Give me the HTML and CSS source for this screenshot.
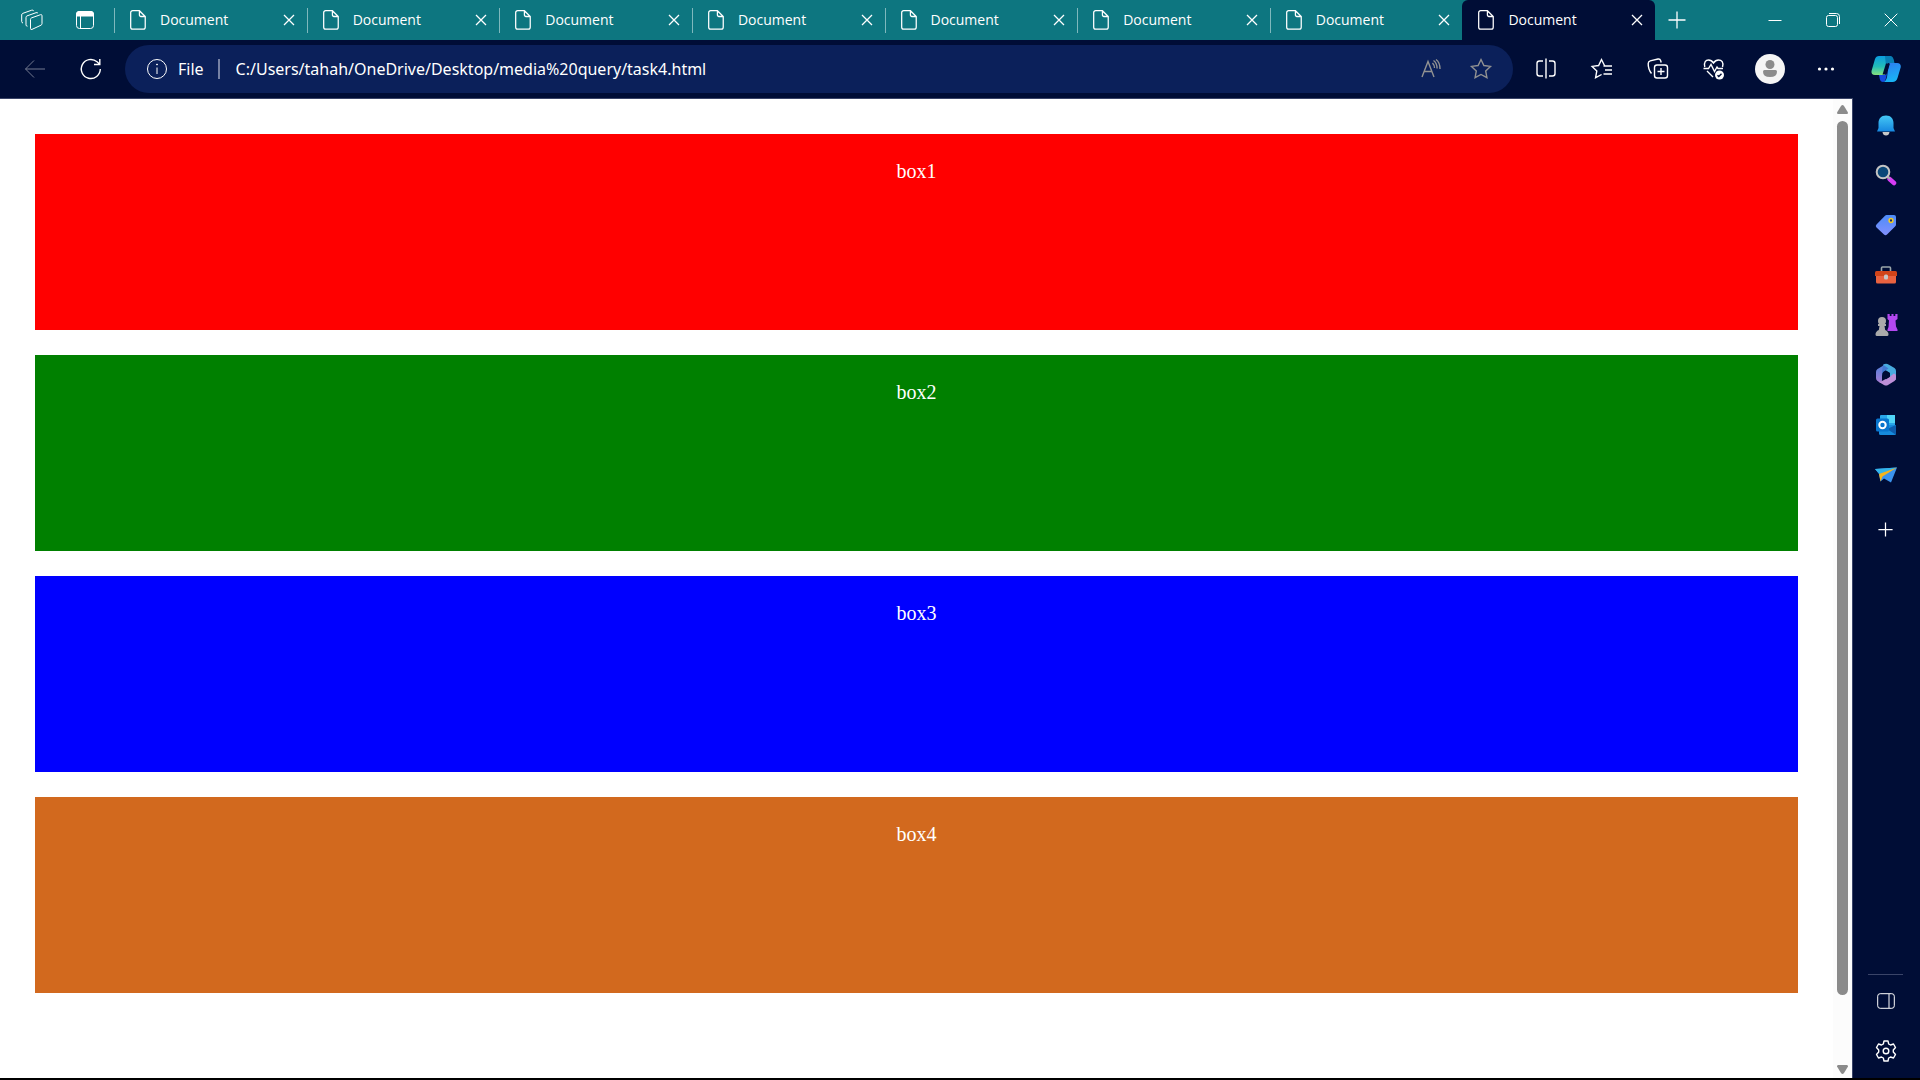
FILE: index.html
```html
<!DOCTYPE html>
<html lang="en">
<head>
<meta charset="utf-8">
<title>Document</title>
<link rel="stylesheet" href="styles.css">
</head>
<body>
<svg class="defs" aria-hidden="true">
  <symbol id="doc" viewBox="0 0 16 20"><path d="M2.500.5H9.500L15.500 6.500V17.500a2 2 0 0 1-2 2H2.500a2 2 0 0 1-2-2V2.500a2 2 0 0 1 2-2ZM9.500.5V5a1.500 1.500 0 0 0 1.500 1.500h4.500" transform="translate(.2 .2) scale(.97)"/></symbol>
  <symbol id="cross" viewBox="0 0 12 12"><path d="M1 1l10 10M11 1L1 11"/></symbol>
  <symbol id="plus" viewBox="0 0 18 18"><path d="M9 .5v17M.5 9h17"/></symbol>
</svg>
<div class="browser">
  <header class="tabstrip">
    <button class="strip-btn" aria-label="Workspaces"><svg class="line" width="22" height="22" viewBox="0 0 22 22"><path d="M9.500 10.500q0-1.200 1-1.600l9-3.200q1.500-.4 1.500 1v8q0 1-1 1.500l-9 4.200q-1.500.6-1.500-1ZM6.500 17.200q-1.500 0-1.500-1.300V8.500q0-1.200 1-1.600l9-3.200q1.500-.4 2 .6M2 14q-1.300-.2-1.300-1.500V6q0-1.200 1-1.600l9-3.200q1.500-.4 2 .6"/></svg></button>
    <button class="strip-btn" aria-label="Tab actions"><svg class="line" width="20" height="20" viewBox="0 0 20 20"><rect x="1.500" y="1.500" width="17" height="17" rx="3"/><path d="M1.500 6V4a2.500 2.500 0 0 1 2.500-2.500h12A2.500 2.500 0 0 1 18.500 4v2Z" fill="#fff"/><path d="M5.500 6v12"/></svg></button>
    <nav class="tabs" aria-label="Tabs">
      <div class="tab"><svg class="line" width="16" height="20"><use href="#doc"/></svg><a href="#">Document</a><button aria-label="Close tab"><svg class="line" width="12" height="12"><use href="#cross"/></svg></button></div>
      <div class="tab"><svg class="line" width="16" height="20"><use href="#doc"/></svg><a href="#">Document</a><button aria-label="Close tab"><svg class="line" width="12" height="12"><use href="#cross"/></svg></button></div>
      <div class="tab"><svg class="line" width="16" height="20"><use href="#doc"/></svg><a href="#">Document</a><button aria-label="Close tab"><svg class="line" width="12" height="12"><use href="#cross"/></svg></button></div>
      <div class="tab"><svg class="line" width="16" height="20"><use href="#doc"/></svg><a href="#">Document</a><button aria-label="Close tab"><svg class="line" width="12" height="12"><use href="#cross"/></svg></button></div>
      <div class="tab"><svg class="line" width="16" height="20"><use href="#doc"/></svg><a href="#">Document</a><button aria-label="Close tab"><svg class="line" width="12" height="12"><use href="#cross"/></svg></button></div>
      <div class="tab"><svg class="line" width="16" height="20"><use href="#doc"/></svg><a href="#">Document</a><button aria-label="Close tab"><svg class="line" width="12" height="12"><use href="#cross"/></svg></button></div>
      <div class="tab"><svg class="line" width="16" height="20"><use href="#doc"/></svg><a href="#">Document</a><button aria-label="Close tab"><svg class="line" width="12" height="12"><use href="#cross"/></svg></button></div>
      <div class="tab active"><svg class="line" width="16" height="20"><use href="#doc"/></svg><a href="#" aria-current="page">Document</a><button aria-label="Close tab"><svg class="line" width="12" height="12"><use href="#cross"/></svg></button></div>
    </nav>
    <button class="new-tab" aria-label="New tab"><svg class="line" width="18" height="18"><use href="#plus"/></svg></button>
    <div class="window-controls">
      <button aria-label="Minimize"><svg class="line" width="14" height="14" viewBox="0 0 14 14"><path d="M.5 7.500h13"/></svg></button>
      <button aria-label="Restore"><svg class="line" width="14" height="14" viewBox="0 0 14 14"><rect x=".5" y="2.500" width="11" height="11" rx="2"/><path d="M3 .5h7.500a3 3 0 0 1 3 3V11"/></svg></button>
      <button aria-label="Close"><svg class="line" width="14" height="14" viewBox="0 0 14 14"><path d="M.7.7l12.600 12.600M13.300.7L.7 13.300"/></svg></button>
    </div>
  </header>

  <div class="toolbar">
    <button class="tool dim" aria-label="Back"><svg class="line" width="22" height="20" viewBox="0 0 22 20"><path d="M21 10H1.500M10 1.500L1.500 10l8.500 8.500"/></svg></button>
    <button class="tool" aria-label="Refresh"><svg class="line thick" width="22" height="22" viewBox="0 0 22 22"><path d="M20.300 11a9.500 9.500 0 1 1-3.300-7.200L19.500 6M19.800 1v5.500H14"/></svg></button>
    <div class="address">
      <svg class="line" width="22" height="22" viewBox="0 0 22 22"><circle cx="11" cy="11" r="9.500"/><path d="M11 9.500v6.500"/><circle cx="11" cy="6.500" r=".5" fill="#fff"/></svg>
      <label for="url">File</label>
      <input id="url" type="text" value="C:/Users/tahah/OneDrive/Desktop/media%20query/task4.html">
      <button class="addr-btn" aria-label="Read aloud"><svg class="line" width="20" height="20" viewBox="0 0 20 20"><path d="M1 18L7 2.500 13 18M3.200 12.500h7.600M11.500 4q2 2 2 5M12.500 1.500q3.500 2.500 3.600 8M15 .5q4 3 4 9.500"/></svg></button>
      <button class="addr-btn" aria-label="Add to favorites"><svg class="line" width="22" height="22" viewBox="0 0 22 22"><path d="M11 1.500l2.900 6 6.600.9-4.800 4.600 1.200 6.600L11 16.500l-5.900 3.100L6.300 13 1.500 8.400l6.600-.9Z"/></svg></button>
    </div>
    <button class="tool" aria-label="Split screen"><svg class="line thick" width="22" height="22" viewBox="0 0 22 22"><path d="M8 3H4.500A2.500 2.500 0 0 0 2 5.500v10A2.500 2.500 0 0 0 4.500 18H8M14 3h3.500A2.500 2.500 0 0 1 20 5.500v10a2.500 2.500 0 0 1-2.500 2.500H14M11 .5v20"/></svg></button>
    <button class="tool" aria-label="Favorites"><svg class="line thick" width="22" height="22" viewBox="0 0 22 22"><path d="M13.500 7.500L10.500 1.500 7.600 7.500l-6.500.9 4.700 4.600-1.200 6.600 6-3.100M12.500 8H21M14 12h7M12.500 16H21"/></svg></button>
    <button class="tool" aria-label="Collections"><svg class="line thick" width="22" height="22" viewBox="0 0 22 22"><rect x="7.500" y="7" width="13" height="13" rx="2.500"/><path d="M14 10v7M10.500 13.500h7M4.500 15.500Q1 11 1.200 5.500q0-2 2-2.600L11 1q2-.4 2.600 1.500l.6 2"/></svg></button>
    <button class="tool" aria-label="Browser essentials"><svg class="line thick" width="22" height="22" viewBox="0 0 22 22"><path d="M1.800 9C.5 4 3 2 5.500 2q3 0 5 3 2-3 5-3c3 0 5.500 2 4 7M.5 10.500h5L8 6.500l3.500 7L14 9l1 1.500h5M4 13l6 6"/><circle cx="16.500" cy="17" r="4.500" fill="#fff" stroke="none"/><path d="M14.500 17.200l1.300 1.300 2.700-2.700" stroke="#000d36"/></svg></button>
    <button class="tool" aria-label="Profile"><svg width="30" height="30" viewBox="0 0 30 30"><circle cx="15" cy="15" r="15" fill="#f5f5f5"/><circle cx="15" cy="10.500" r="4.500" fill="#8c8c8c"/><path d="M9.500 16h11q1.500 0 1.500 1.500Q22 23 15 23t-7-5.500Q8 16 9.500 16Z" fill="#8c8c8c"/></svg></button>
    <button class="tool" aria-label="Settings and more"><svg width="18" height="6" viewBox="0 0 18 6" fill="#fff"><circle cx="2.500" cy="3" r="1.600"/><circle cx="9" cy="3" r="1.600"/><circle cx="15.500" cy="3" r="1.600"/></svg></button>
    <button class="copilot" aria-label="Copilot"><svg width="30" height="28" viewBox="0 0 30 28"><defs><linearGradient id="ca" x2="0" y2="1"><stop stop-color="#0b9de0"/><stop offset=".55" stop-color="#22bcb8"/><stop offset="1" stop-color="#86e27d"/></linearGradient><linearGradient id="cb" x2=".3" y2="1"><stop stop-color="#2f7af0"/><stop offset="1" stop-color="#19b3f5"/></linearGradient></defs><path d="M8 1h10q3 0 4 3l1 4h-6l-3 12H4q-4 0-3.500-4L4 4q1-3 4-3Z" fill="url(#ca)"/><path d="M14 1h5q2.500 0 3.500 3l1 4h-6Q16 8 15 11Z" fill="#087eb5"/><path d="M18 8h8q4 0 3.800 4L26.500 23q-1.200 4-5 4H12q3-.5 4-5Z" fill="url(#cb)"/><path d="M8 20h6l3-5-2 8q-1 4-3 4-2.500 0-3.200-3Z" fill="#154ce0"/><path d="M15 8.500h4L15.500 19.500h-4Z" fill="#000d36"/></svg></button>
  </div>

  <div class="body">
    <div class="view">
      <main class="page">
        <div class="box red">box1</div>
        <div class="box green">box2</div>
        <div class="box blue">box3</div>
        <div class="box chocolate">box4</div>
      </main>
      <div class="scrollbar" aria-hidden="true">
        <svg width="11" height="9" viewBox="0 0 11 9"><path d="M5.500 0Q6.200 0 7 1l4 6.500Q11 9 10 9H1Q0 9 0 7.500L4 1q.8-1 1.500-1Z"/></svg>
        <div class="track"><div class="thumb"></div></div>
        <svg width="11" height="9" viewBox="0 0 11 9"><path d="M5.500 9Q6.200 9 7 8l4-6.500Q11 0 10 0H1Q0 0 0 1.500L4 8q.8 1 1.500 1Z"/></svg>
      </div>
    </div>
    <aside class="sidebar">
      <button aria-label="Notifications"><svg width="22" height="24" viewBox="0 0 22 24"><defs><linearGradient id="be" x2="0" y2="1"><stop stop-color="#45c8f5"/><stop offset="1" stop-color="#1687e0"/></linearGradient></defs><path d="M7.500 19h7q-.5 3.500-3.500 3.500T7.500 19Z" fill="#c8c8c8"/><path d="M11 2.500c5 0 7.500 3.500 7.500 7.500v5l1.500 3.500H2L3.500 15v-5C3.500 6 6 2.500 11 2.500Z" fill="url(#be)"/></svg></button>
      <button aria-label="Search"><svg width="22" height="22" viewBox="0 0 22 22"><path d="M14.500 15l4.500 4" stroke="#d63cf5" stroke-width="4.500" stroke-linecap="round"/><path d="M12 12l3 3" stroke="#aaa" stroke-width="2"/><circle cx="8" cy="8" r="6.300" fill="#0b4778" stroke="#c4c4c4" stroke-width="2"/></svg></button>
      <button aria-label="Shopping"><svg width="22" height="22" viewBox="0 0 22 22"><defs><linearGradient id="tg" x2="0" y2="1"><stop stop-color="#4d8cf7"/><stop offset="1" stop-color="#8290ff"/></linearGradient></defs><path d="M11.500 1H19q2 0 2 2v7.500q0 1-.7 1.700L12 20.500q-1.500 1.500-3 0L1.500 13.500q-1.500-1.500 0-3L10 1.700q.6-.7 1.500-.7Z" fill="url(#tg)"/><circle cx="16" cy="6.500" r="1.900" fill="#152b70" stroke="#f2cb21" stroke-width="1.500"/></svg></button>
      <button aria-label="Tools"><svg width="24" height="20" viewBox="0 0 24 20"><path d="M7.500 7V3q0-1 1-1h7q1 0 1 1v4" fill="none" stroke="#9ba6aa" stroke-width="1.600"/><path d="M2 9h20v8q0 1.500-1.500 1.500h-17Q2 18.500 2 17Z" fill="#e96240"/><path d="M2.500 6h19q1.500 0 1.500 1.500V11H1V7.500Q1 6 2.500 6Z" fill="#d14419"/><rect x="10" y="9.500" width="4" height="5" rx="1.500" fill="#c7c7c7"/></svg></button>
      <button aria-label="Games"><svg width="24" height="24" viewBox="0 0 24 24"><path d="M13.500 1h2.200v2h1.800V1h2v2h1.800V1h2.200v5l-2 1.500.5 6 1.500 3v1.500h-10V16.500l1-2.500.5-6.500-1.500-1.500Z" fill="#b348f0"/><g fill="#aaa"><circle cx="8" cy="8" r="4"/><path d="M4 11h8v2h-1.500l.7 4q3.300 1.500 3.300 4.500 0 1.500-1.500 1.500H3q-1.500 0-1.500-1.500 0-3 3.300-4.500l.7-4H4Z"/></g></svg></button>
      <button aria-label="Microsoft 365"><svg width="22" height="24" viewBox="0 0 22 24"><defs><linearGradient id="ma" x2="0" y2="1"><stop stop-color="#4a82dd"/><stop offset="1" stop-color="#a77bd2"/></linearGradient></defs><path d="M11 1L2.500 6Q1 7 1 9v6q0 2 1.500 3L6 20q1-1 1-3v-6q0-2 1.500-3l5-2.500V2.300Z" fill="url(#ma)"/><path d="M8 1.800Q11 0 13.500 1.500L19.500 5Q21 6 21 8v9L15 13.500V10L8 5.500Z" fill="#48abdf"/><path d="M21 13v2q0 2-1.500 3l-6.500 4q-2 1.200-4 0L3 18.500q3 .5 5-1l7-4 4-3Q21 11 21 13Z" fill="#bd8fd8"/><path d="M8 1.800L13.500 5.500 8 9v4l-1-4Z" fill="#4379d2"/><path d="M11 8l3.700 2v4L11 16.200 7.500 14v-4Z" fill="#000d36"/></svg></button>
      <button aria-label="Outlook"><svg width="22" height="22" viewBox="0 0 22 22"><rect x="5" y="1" width="15" height="12" rx="1" fill="#29a7e9"/><path d="M12 1h8v8h-8Z" fill="#50d5f7"/><path d="M4 11l17 0v8.500q0 1.500-1.500 1.500H5.500Q4 21 4 19.500Z" fill="#168bdd"/><path d="M21 11v8.500q0 .7-.5 1L12 15Z" fill="#0d5cad"/><rect x="1" y="4.500" width="13" height="13" rx="1.500" fill="#0875ce"/><circle cx="7.500" cy="11" r="3.200" fill="none" stroke="#fff" stroke-width="2"/></svg></button>
      <button aria-label="Drop"><svg width="24" height="22" viewBox="0 0 24 22"><path d="M1 5L23 3.500 17 18.500 10 14.500 6.500 17.500 5 10Z" fill="#3b93ee"/><path d="M1 5L23 3.500 5.500 10Z" fill="#32b5ea"/><path d="M5 10L23 3.500 8.500 12.500 6.500 17.500Z" fill="#f6b51b"/></svg></button>
      <button class="add" aria-label="Customize"><svg class="line" width="15" height="15"><use href="#plus"/></svg></button>
      <div class="sidebar-end">
        <button aria-label="Hide sidebar"><svg class="line" width="18" height="16" viewBox="0 0 18 16"><rect x=".7" y=".7" width="16.600" height="14.600" rx="2.500"/><path d="M12 1v14"/></svg></button>
        <button aria-label="Settings"><svg class="line thick" width="22" height="22" viewBox="0 0 22 22"><path d="M9 1h4l.7 3 1.800 1 3-1 2 3.500L18.300 10v2l2.200 2.500-2 3.500-3-1-1.800 1-.7 3H9l-.7-3-1.800-1-3 1-2-3.500L3.700 12v-2L1.500 7.500l2-3.500 3 1 1.800-1Z" stroke-linejoin="round"/><circle cx="11" cy="11" r="2.800"/></svg></button>
      </div>
    </aside>
  </div>
</div>
</body>
</html>
```
FILE: styles.css
```css
* { box-sizing: border-box; }
body {
  margin: 0;
  font-family: "Open Sans", "Noto Sans", sans-serif;
  color: #fff;
}
button {
  display: flex;
  align-items: center;
  justify-content: center;
  padding: 0;
  border: 0;
  background: none;
  color: inherit;
}
svg { flex: none; }
.defs { position: absolute; width: 0; height: 0; }
.line { fill: none; stroke: #fff; stroke-width: 1; overflow: visible; }
.thick { stroke-width: 1.4; }

.browser {
  display: flex;
  flex-direction: column;
  height: 100vh;
  background: #000d36;
  border-bottom: 2px solid #000;
}

/* Tab strip */
.tabstrip {
  display: flex;
  height: 40px;
  padding-left: 5px;
  background: #0d7680;
}
.strip-btn { width: 53px; height: 32px; margin-top: 4px; }
.tabs {
  display: grid;
  grid-template-columns: repeat(8, minmax(0, 1fr));
  flex: 0 1 1541px;
  margin-left: 3px;
}
.tab {
  display: flex;
  align-items: center;
  padding: 0 8px 0 16px;
  background: linear-gradient(#7fb8bd, #7fb8bd) 0 8px / 1px 25px no-repeat;
}
.tab a {
  flex: 1;
  margin-left: 14px;
  color: #fff;
  font-size: 14px;
  line-height: 20px;
  text-decoration: none;
}
.tab button { width: 20px; height: 20px; }
.tab .line, .new-tab .line { stroke-width: 1.3; }
.active { background: #000d36; border-radius: 6px 6px 0 0; }
.new-tab { width: 44px; }
.window-controls { display: flex; margin-left: auto; }
.window-controls button { width: 58px; }

/* Toolbar */
.toolbar {
  display: flex;
  align-items: center;
  height: 58px;
  padding-left: 7px;
}
.tool { width: 56px; height: 48px; }
.dim { opacity: .45; }
.copilot { width: 66px; height: 48px; padding-right: 2px; }
.address {
  display: flex;
  align-items: center;
  flex: 1;
  height: 48px;
  margin: 0 5px 0 6px;
  padding: 0 7px 0 21px;
  border-radius: 24px;
  background: #0b205a;
  font-family: "Noto Sans", "Open Sans", sans-serif;
  font-size: 16px;
}
.address label {
  margin-left: 10px;
  padding-right: 16px;
  background: linear-gradient(#7681a4, #7681a4) right / 2px 20px no-repeat;
}
.address input {
  flex: 1;
  min-width: 0;
  padding: 0 0 0 16px;
  border: 0;
  outline: 0;
  background: none;
  color: #fff;
  font: inherit;
}
.addr-btn { width: 50px; height: 48px; }
.addr-btn .line { stroke: #929292; stroke-width: 1.4; }

/* Page and sidebar */
.body { display: flex; flex: 1; min-height: 0; }
.view {
  display: flex;
  flex: 1;
  border-top: 1px solid #3a4468;
  border-right: 1px solid #3a4468;
  background: #fff;
}
.page {
  display: flex;
  flex-direction: column;
  flex: 1;
  gap: 25px;
  padding: 35px;
  overflow: hidden;
}
.box {
  flex: none;
  height: 196px;
  padding: 25px;
  font: 20px/24px "Liberation Serif", "Times New Roman", serif;
  text-align: center;
}
.red { background: red; }
.green { background: green; }
.blue { background: blue; }
.chocolate { background: chocolate; }
.scrollbar {
  display: flex;
  flex-direction: column;
  align-items: center;
  gap: 7px;
  width: 19px;
  padding: 6px 0 4px;
  background: #fcfcfc;
  fill: #8b8b8b;
}
.track { flex: 1; }
.thumb { width: 11px; height: 93.3%; border-radius: 6px; background: #8b8b8b; }
.sidebar {
  display: flex;
  flex-direction: column;
  width: 67px;
  padding: 2px 2px 0 0;
}
.sidebar button { width: 100%; height: 50px; }
.sidebar .add { height: 58px; }
.add .line { stroke-width: 1.5; }
.sidebar-end {
  margin-top: auto;
  padding: 2px 0;
  background: linear-gradient(#3a4468, #3a4468) top / 35px 1px no-repeat;
}
```
